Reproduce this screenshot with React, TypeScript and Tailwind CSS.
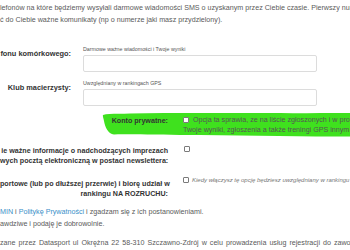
import React from "react";

type BoxProps = { className?: string }

function Box({ className = "" }: BoxProps) {
    return <span className={`inline-block w-[6px] h-[6px] border border-[#7a7a7a] rounded-[1px] bg-white shrink-0 ${className}`}></span>
}

function Marker() {
    return (
        <svg className="absolute left-0 top-0 w-[350px] h-[24px] overflow-visible" viewBox="0 0 350 24">
            <path
                d="M103,2 C108,0 118,1 130,0.5 C190,-0.5 260,0.5 352,0 L352,23.5 C300,24 240,22 180,22 C150,22 126,21 114,21.5 C108,21 105,14 104,8 C103.5,5 102.5,3 103,2 Z"
                fill="#3fe11e"
            />
        </svg>
    )
}

export default function App() {
    return (
        <div className="w-[350px] h-[250px] overflow-hidden bg-white font-['Liberation_Sans',Arial,sans-serif] text-[#5a5a5a]">
            <p className="pt-[1.6px] text-[7.15px] leading-[12.7px] whitespace-nowrap">
                lefonów na które będziemy wysyłali darmowe wiadomości SMS o uzyskanym przez Ciebie czasie. Pierwszy numer
                <br />
                ć do Ciebie ważne komunikaty (np o numerze jaki masz przydzielony).
            </p>

            <div className="flex mt-[19px]">
                <div className="w-[71px] shrink-0 text-right pt-[2.7px] text-[7.4px] leading-[9px] font-bold text-[#333] whitespace-nowrap">fonu komórkowego:</div>
                <div className="ml-[12px] w-[234px]">
                    <div className="text-[5.3px] leading-[6px] text-[#555] whitespace-nowrap">Darmowe ważne wiadomości i Twoje wyniki</div>
                    <div className="mt-[2.5px] h-[17px] border border-[#dcdcdc] rounded-[2px] bg-white"></div>
                </div>
            </div>

            <div className="flex mt-[8.5px]">
                <div className="w-[71px] shrink-0 text-right pt-[2.7px] text-[7.4px] leading-[9px] font-bold text-[#333] whitespace-nowrap">Klub macierzysty:</div>
                <div className="ml-[12px] w-[234px]">
                    <div className="text-[5.3px] leading-[6px] text-[#555] whitespace-nowrap">Uwzględniany w rankingach GPS</div>
                    <div className="mt-[2.5px] h-[17px] border border-[#dcdcdc] rounded-[2px] bg-white"></div>
                </div>
            </div>

            <div className="relative flex mt-[7.5px] h-[21px]">
                <Marker />
                <div className="relative w-[168px] shrink-0 text-right pt-[3px] text-[7.15px] leading-[10px] font-bold text-[#333] whitespace-nowrap">Konto prywatne:</div>
                <div className="relative ml-[15px] pt-[2px] text-[7.15px] leading-[10px] whitespace-nowrap text-[#555]">
                    <div className="flex items-center gap-[4px]"><Box />Opcja ta sprawia, ze na liście zgłoszonych i w protokołach</div>
                    <div>Twoje wyniki, zgłoszenia a także treningi GPS innym osobom</div>
                </div>
            </div>

            <div className="flex mt-[11px]">
                <div className="w-[168px] shrink-0 text-right pt-[0.6px] text-[7.15px] leading-[10.7px] font-bold text-[#333] whitespace-nowrap">
                    ie ważne informacje o nadchodzących imprezach<br />wych pocztą elektroniczną w postaci newslettera:
                </div>
                <div className="ml-[16px] pt-[1px] flex">
                    <Box />
                </div>
            </div>

            <div className="flex mt-[9px]">
                <div className="w-[168px] shrink-0 text-right pt-[3px] text-[7.15px] leading-[10px] font-bold text-[#333] whitespace-nowrap">
                    portowe (lub po dłuższej przerwie) i biorę udział w<br />rankingu NA ROZRUCHU:
                </div>
                <div className="ml-[15px] h-[8px] flex items-center gap-[3px] whitespace-nowrap">
                    <Box />
                    <span className="italic text-[6px] leading-[8px] text-[#777]">Kiedy włączysz tę opcję będziesz uwzględniany w rankingu</span>
                </div>
            </div>

            <p className="mt-[7px] text-[7.15px] leading-[12px] whitespace-nowrap">
                <span className="text-[#3a8fc8]">MIN</span> i <span className="text-[#3a8fc8]">Politykę Prywatności</span> i zgadzam się z ich postanowieniami.
                <br />
                awdziwe i podaję je dobrowolnie.
            </p>
            <p className="mt-[7px] text-[7.15px] leading-[12px] whitespace-nowrap [word-spacing:1px]">
                zane przez Datasport ul Okrężna 22 58-310 Szczawno-Zdrój w celu prowadzenia usług rejestracji do zawodów
            </p>
        </div>
    )
}
